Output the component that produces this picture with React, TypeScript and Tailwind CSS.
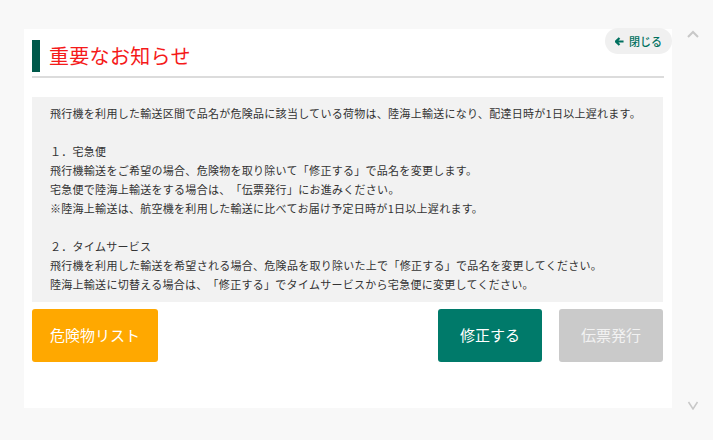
import React from 'react';

const FONT = { fontFamily: '"Noto Sans CJK JP", "Noto Sans", sans-serif' };

const lines: string[] = [
  '飛行機を利用した輸送区間で品名が危険品に該当している荷物は、陸海上輸送になり、配達日時が1日以上遅れます。',
  '',
  '１．宅急便',
  '飛行機輸送をご希望の場合、危険物を取り除いて「修正する」で品名を変更します。',
  '宅急便で陸海上輸送をする場合は、「伝票発行」にお進みください。',
  '※陸海上輸送は、航空機を利用した輸送に比べてお届け予定日時が1日以上遅れます。',
  '',
  '２．タイムサービス',
  '飛行機を利用した輸送を希望される場合、危険品を取り除いた上で「修正する」で品名を変更してください。',
  '陸海上輸送に切替える場合は、「修正する」でタイムサービスから宅急便に変更してください。',
];

export default function App() {
  return (
    <div className="flex h-[440px] w-[713px] bg-[#f8f8f8] [text-spacing-trim:space-all]" style={FONT}>
      <div className="pl-[24px] pt-[29px]">
        <div className="relative flex h-[379px] w-[648px] flex-col bg-white px-[8px] pt-[11px]">
          {/* 閉じる */}
          <button className="absolute right-0 top-[-1px] flex h-[26px] w-[67px] items-center justify-center gap-[5px] rounded-full bg-[#f0f0f0] text-[11px] font-medium text-[#00705f]">
            <svg width="9" height="9" viewBox="0 0 10 10">
              <path d="M5 1 L1 5 L5 9 M1.5 5 H9.5" fill="none" stroke="#00705f" strokeWidth="2.4" />
            </svg>
            閉じる
          </button>

          <div className="flex items-center">
            <div className="h-[32px] w-[8px] bg-[#00594a]" />
            <h1 className="ml-[9px] text-[20px] leading-[32px] tracking-[0.3px] text-[#f51a1a]">重要なお知らせ</h1>
          </div>
          <div className="mt-[4px] h-[2px] w-full bg-[#dcdcdc]" />

          <div className="mt-[19px] w-[631px] bg-[#f2f2f2] pl-[18px] pb-[8px] pt-[7px] text-[11px] leading-[19px] tracking-[0.28px] text-[#333]">
            {lines.map((l, i) => (
              <div key={i} className="h-[19px] whitespace-nowrap">
                {l}
              </div>
            ))}
          </div>

          <div className="mt-[7px] flex w-[631px] items-center">
            <button className="h-[53px] w-[126px] rounded-[3px] bg-[#ffa800] text-[15px] text-white">
              危険物リスト
            </button>
            <div className="flex-1" />
            <button className="h-[53px] w-[104px] rounded-[3px] bg-[#007a6a] text-[15px] text-white">
              修正する
            </button>
            <button className="ml-[17px] h-[53px] w-[104px] rounded-[3px] bg-[#cacaca] text-[15px] text-[#f2f2f2]">
              伝票発行
            </button>
          </div>
        </div>
      </div>

      {/* scroll arrows */}
      <div className="flex flex-1 flex-col items-center justify-between pb-[30px] pt-[30px]">
        <svg width="12" height="8" viewBox="0 0 12 8">
          <path d="M1 7 L6 2 L11 7" fill="none" stroke="#c8c8c8" strokeWidth="2" />
        </svg>
        <svg width="12" height="9" viewBox="0 0 12 9">
          <path d="M1.5 1 L6 8 L10.5 1" fill="none" stroke="#c8c8c8" strokeWidth="1.5" />
        </svg>
      </div>
    </div>
  );
}
